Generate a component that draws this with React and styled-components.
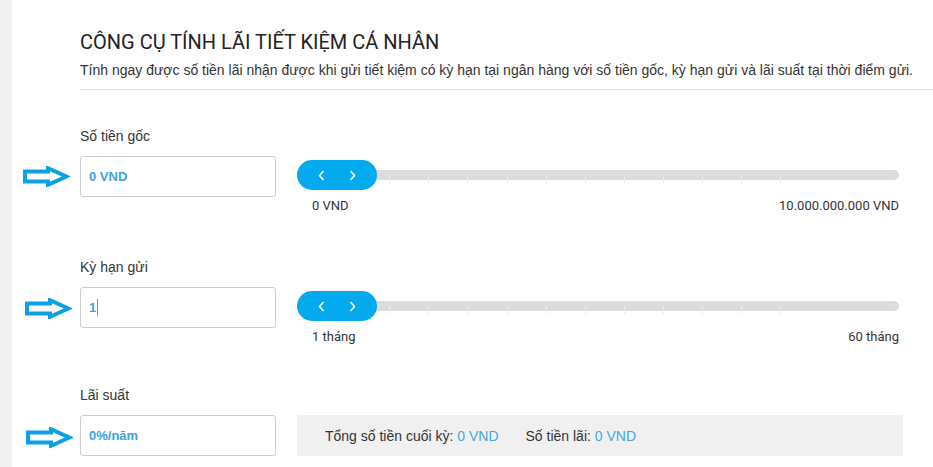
import React from "react";
import styled, { createGlobalStyle } from "styled-components";

const GlobalStyle = createGlobalStyle`
  html, body { margin: 0; padding: 0; background: #fff; }
  body { font-family: "Liberation Sans", Arial, sans-serif; color: #333; }
  * { box-sizing: border-box; }
`;

const Page = styled.div`
  display: flex;
  min-height: 467px;
  width: 933px;
  overflow: hidden;
`;

const SideStrip = styled.div`
  width: 12px;
  flex: none;
  background: #f0f0f0;
`;

const Main = styled.div`
  flex: 1;
  padding: 30px 0 0 68px;
`;

const Title = styled.h1`
  margin: 0;
  font-family: Roboto, "Liberation Sans", sans-serif;
  font-weight: 400;
  font-size: 20px;
  line-height: 24px;
  color: #222;
`;

const Subtitle = styled.p`
  margin: 7px 0 0;
  font-size: 14px;
  line-height: 18px;
  color: #333;
  white-space: nowrap;
`;

const Divider = styled.hr`
  margin: 10px 0 0;
  border: 0;
  border-top: 1px solid #e2e2e2;
`;

const Form = styled.div`
  padding-top: 36px;
`;

const Field = styled.section`
  margin-bottom: ${(p) => p.$gap}px;
`;

const Label = styled.div`
  font-size: 14px;
  line-height: 20px;
  margin-bottom: 10px;
  color: #333;
`;

const Row = styled.div`
  position: relative;
  display: flex;
  align-items: flex-start;
  gap: 21px;
`;

const ArrowMark = styled.svg`
  position: absolute;
  left: ${(p) => p.$left}px;
  top: ${(p) => p.$top}px;
  width: 47px;
  height: 21px;
`;

const InputBox = styled.div`
  width: 196px;
  height: 41px;
  flex: none;
  border: 1px solid #cccccc;
  border-radius: 3px;
  display: flex;
  align-items: center;
  padding-left: 8px;
  font-size: 13px;
  font-weight: 700;
  color: #3fa2e0;
`;

const Caret = styled.span`
  display: inline-block;
  width: 1px;
  height: 17px;
  margin-left: 1px;
  background: #3fa2e0;
`;

const SliderCol = styled.div`
  width: 602px;
  padding-top: 4px;
`;

const Track = styled.div`
  position: relative;
  height: 30px;
  display: flex;
  align-items: center;
`;

const Rail = styled.div`
  position: relative;
  width: 100%;
  height: 10px;
  border-radius: 5px;
  background: #dcdcdc;
`;

const Tick = styled.span`
  position: absolute;
  top: 5px;
  width: 1px;
  height: 8px;
  background: #ececec;
`;

const Thumb = styled.div`
  position: absolute;
  left: 0;
  top: 0;
  width: 80px;
  height: 30px;
  border-radius: 15px;
  background: #03aaee;
  display: flex;
  align-items: center;
  justify-content: center;
  gap: 24px;
`;

const Ends = styled.div`
  display: flex;
  justify-content: space-between;
  padding-left: 15px;
  margin-top: 8px;
  font-family: Roboto, "Liberation Sans", sans-serif;
  font-size: 13px;
  line-height: 15px;
  color: #333;
`;

const ResultBox = styled.div`
  width: 606px;
  height: 41px;
  background: #f0f0f0;
  display: flex;
  align-items: center;
  gap: 27px;
  padding-left: 28px;
  font-size: 14px;
  color: #333;
`;

const Value = styled.span`
  color: #44a6e2;
`;

const Arrow = ({ left, top }) => (
  <ArrowMark $left={left} $top={top} viewBox="0 0 47 21">
    <path
      d="M2 5.5 H25 V2.2 L43.5 10.5 L25 18.8 V15.5 H2 Z"
      fill="#fff"
      stroke="#0aa2e4"
      strokeWidth="4"
      strokeLinejoin="miter"
    />
  </ArrowMark>
);

const Chevron = ({ dir }) => (
  <svg width="7" height="11" viewBox="0 0 7 11">
    <path
      d={dir === "left" ? "M5.5 1 L1.5 5.5 L5.5 10" : "M1.5 1 L5.5 5.5 L1.5 10"}
      fill="none"
      stroke="#fff"
      strokeWidth="1.6"
    />
  </svg>
);

const ticks = Array.from({ length: 13 }, (_, i) => 14 + i * 39.1);

const Slider = ({ min, max }) => (
  <SliderCol>
    <Track>
      <Rail>
        {ticks.map((x) => (
          <Tick key={x} style={{ left: `${x}px` }} />
        ))}
      </Rail>
      <Thumb>
        <Chevron dir="left" />
        <Chevron dir="right" />
      </Thumb>
    </Track>
    <Ends>
      <span>{min}</span>
      <span>{max}</span>
    </Ends>
  </SliderCol>
);

export default function App() {
  return (
    <>
      <GlobalStyle />
      <Page>
        <SideStrip />
        <Main>
          <Title>CÔNG CỤ TÍNH LÃI TIẾT KIỆM CÁ NHÂN</Title>
          <Subtitle>
            Tính ngay được số tiền lãi nhận được khi gửi tiết kiệm có kỳ hạn tại ngân hàng với số tiền gốc, kỳ hạn gửi và lãi suất tại thời điểm gửi.
          </Subtitle>
          <Divider />
          <Form>
            <Field $gap={44}>
              <Label>Số tiền gốc</Label>
              <Row>
                <Arrow left={-57} top={10} />
                <InputBox>0 VND</InputBox>
                <Slider min="0 VND" max="10.000.000.000 VND" />
              </Row>
            </Field>
            <Field $gap={41}>
              <Label>Kỳ hạn gửi</Label>
              <Row>
                <Arrow left={-55} top={11} />
                <InputBox>
                  1<Caret />
                </InputBox>
                <Slider min="1 tháng" max="60 tháng" />
              </Row>
            </Field>
            <Field $gap={0}>
              <Label>Lãi suất</Label>
              <Row>
                <Arrow left={-54} top={12} />
                <InputBox>0%/năm</InputBox>
                <ResultBox>
                  <span>
                    Tổng số tiền cuối kỳ: <Value>0 VND</Value>
                  </span>
                  <span>
                    Số tiền lãi: <Value>0 VND</Value>
                  </span>
                </ResultBox>
              </Row>
            </Field>
          </Form>
        </Main>
      </Page>
    </>
  );
}
